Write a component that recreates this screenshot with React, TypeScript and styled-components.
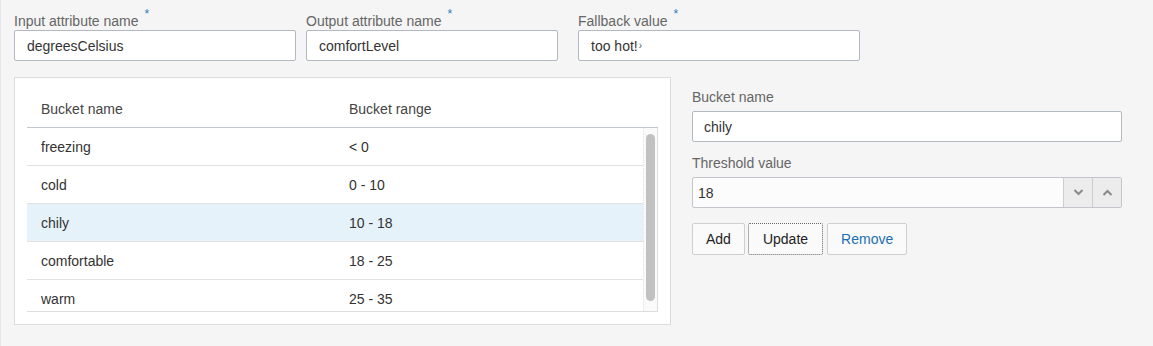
import * as React from "react";
import styled, {createGlobalStyle} from "styled-components";

const Global = createGlobalStyle`
  html, body {
    margin: 0;
    background: #f5f5f5;
  }
  body {
    font-family: "Liberation Sans", Arial, sans-serif;
    font-size: 14px;
    color: #333;
  }
  * {
    box-sizing: border-box;
  }
`

const Page = styled.div`
  height: 346px;
  padding: 6px 0 0 13px;
  border-left: 1px solid #e6e6e6;
`
const TopRow = styled.div`
  display: flex;
  align-items: flex-start;
`
const Field = styled.div<{ $width: number; $gap: number }>`
  width: ${p => p.$width}px;
  margin-right: ${p => p.$gap}px;
  display: flex;
  flex-flow: column nowrap;
`
const Label = styled.label`
  color: #666;
  line-height: 20px;
  height: 20px;
  margin-bottom: 4px;
  white-space: nowrap;
`
const Required = styled.sup`
  color: #2a7bc0;
  font-size: 12px;
  margin-left: 6px;
  position: relative;
  top: -2px;
`
const TextBox = styled.div<{ $pad?: number }>`
  height: 31px;
  background: #fff;
  border: 1px solid #b3b9c1;
  border-radius: 2px;
  padding: 0 ${p => p.$pad ?? 12}px;
  display: flex;
  align-items: center;
  color: #333;
  white-space: nowrap;
`
const Caret = styled.span`
  font-size: 10px;
  color: #555;
  margin-left: 1px;
`
const Main = styled.div`
  display: flex;
  align-items: flex-start;
  margin-top: 16px;
`
const Card = styled.div`
  width: 657px;
  height: 248px;
  background: #fff;
  border: 1px solid #dcdcdc;
  padding: 12px;
  display: flex;
  flex-flow: column nowrap;
`
const Row = styled.div<{ $selected?: boolean }>`
  display: grid;
  grid-template-columns: 308px 1fr;
  height: 38px;
  flex-shrink: 0;
  align-items: center;
  border-bottom: 1px solid #e2e2e2;
  background: ${p => (p.$selected ? "#e6f2f9" : "transparent")};
`
const HeadRow = styled(Row)`
  border-bottom: 1px solid #c3c8ce;
  color: #444;
`
const Cell = styled.div`
  padding-left: 14px;
  white-space: nowrap;
`
const Body = styled.div`
  height: 184px;
  display: flex;
  border-right: 1px solid #dedede;
  border-bottom: 1px solid #dedede;
`
const Viewport = styled.div`
  flex: 1;
  overflow: hidden;
  display: flex;
  flex-flow: column nowrap;
`
const Track = styled.div`
  width: 14px;
  background: #fafafa;
  border-left: 1px dotted #e2e2e2;
  padding: 6px 2px 0 2px;
`
const Thumb = styled.div`
  height: 167px;
  border-radius: 5px;
  background: #c1c1c1;
`
const Side = styled.div`
  width: 430px;
  margin-left: 21px;
  margin-top: 10px;
  display: flex;
  flex-flow: column nowrap;
`
const SideField = styled.div`
  display: flex;
  flex-flow: column nowrap;
  margin-bottom: 11px;
`
const NumberBox = styled.div`
  height: 31px;
  display: flex;
  border: 1px solid #c2c6cb;
  border-radius: 2px;
  background: #fcfcfc;
`
const NumberValue = styled.div`
  flex: 1;
  display: flex;
  align-items: center;
  padding-left: 5px;
`
const Spin = styled.div`
  width: 29px;
  background: #ececec;
  border-left: 1px solid #cdcdcd;
  display: flex;
  align-items: center;
  justify-content: center;
`
const Buttons = styled.div`
  display: flex;
  gap: 3px;
  margin-top: 4px;
`
const Button = styled.button<{ $link?: boolean; $focus?: boolean }>`
  height: 32px;
  padding: 0 ${p => (p.$focus ? 14 : 13)}px;
  margin-right: ${p => (p.$focus ? 1 : 0)}px;
  font-family: inherit;
  font-size: 14px;
  color: ${p => (p.$link ? "#1c6fb3" : "#222")};
  background: #fafafa;
  border: 1px ${p => (p.$focus ? "dotted #666" : "solid #cfcfcf")};
  border-radius: 2px;
`

const Chevron = ({up}: { up?: boolean }) => (
    <svg width="11" height="7" viewBox="0 0 11 7">
        <path d={up ? "M1.5 6 L5.5 2 L9.5 6" : "M1.5 1 L5.5 5 L9.5 1"}
              fill="none" stroke="#8a8a8a" strokeWidth="2"/>
    </svg>
)

const buckets = [
    {name: "freezing", range: "< 0"},
    {name: "cold", range: "0 - 10"},
    {name: "chily", range: "10 - 18"},
    {name: "comfortable", range: "18 - 25"},
    {name: "warm", range: "25 - 35"},
]

export default function App() {
    return (
        <Page>
            <Global/>
            <TopRow>
                <Field $width={282} $gap={10}>
                    <Label>Input attribute name<Required>*</Required></Label>
                    <TextBox>degreesCelsius</TextBox>
                </Field>
                <Field $width={252} $gap={20}>
                    <Label>Output attribute name<Required>*</Required></Label>
                    <TextBox>comfortLevel</TextBox>
                </Field>
                <Field $width={282} $gap={0}>
                    <Label>Fallback value<Required>*</Required></Label>
                    <TextBox>too hot!<Caret>›</Caret></TextBox>
                </Field>
            </TopRow>
            <Main>
                <Card>
                    <HeadRow>
                        <Cell>Bucket name</Cell>
                        <Cell>Bucket range</Cell>
                    </HeadRow>
                    <Body>
                        <Viewport>
                            {buckets.map(b => (
                                <Row key={b.name} $selected={b.name === "chily"}>
                                    <Cell>{b.name}</Cell>
                                    <Cell>{b.range}</Cell>
                                </Row>
                            ))}
                        </Viewport>
                        <Track><Thumb/></Track>
                    </Body>
                </Card>
                <Side>
                    <SideField>
                        <Label>Bucket name</Label>
                        <TextBox $pad={11}>chily</TextBox>
                    </SideField>
                    <SideField>
                        <Label>Threshold value</Label>
                        <NumberBox>
                            <NumberValue>18</NumberValue>
                            <Spin><Chevron/></Spin>
                            <Spin><Chevron up/></Spin>
                        </NumberBox>
                    </SideField>
                    <Buttons>
                        <Button>Add</Button>
                        <Button $focus>Update</Button>
                        <Button $link>Remove</Button>
                    </Buttons>
                </Side>
            </Main>
        </Page>
    )
}
